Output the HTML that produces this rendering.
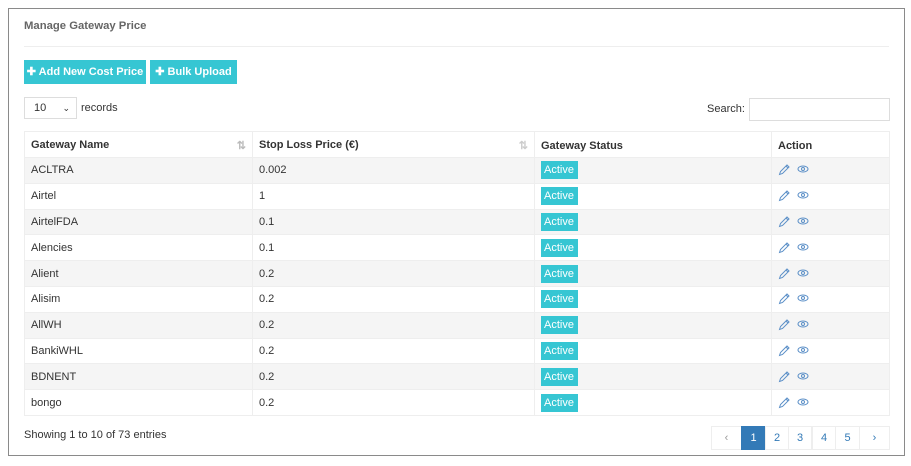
<!DOCTYPE html>
<html><head><meta charset="utf-8"><style>
*{box-sizing:border-box}
body{margin:0;width:911px;height:466px;background:#fff;font-family:"Liberation Sans",Arial,sans-serif;font-size:11px;color:#333;position:relative;overflow:hidden}
.frame{position:absolute;left:8px;top:8px;width:897px;height:448px;border:1.5px solid #8a8a8a}
.abs{position:absolute}
h1{position:absolute;left:24px;top:20px;margin:0;font-size:11.3px;font-weight:bold;color:#666}
.hr{position:absolute;left:24px;top:46px;width:865px;height:1px;background:#eee}
.btn{position:absolute;top:60px;height:24px;background:#36c6d3;color:#fff;font-weight:bold;font-size:11px;line-height:24px;text-align:center}
.sel{position:absolute;left:24px;top:97px;width:53px;height:22px;border:1px solid #ddd;padding-left:9px;line-height:20px}
table{position:absolute;left:24px;top:131px;width:866px;border-collapse:collapse}
td,th{border:1px solid #eee;height:25.8px;padding:0 6px;text-align:left;font-size:11px}
th{height:26px;padding-top:2px}
tbody tr:nth-child(odd){background:#f5f5f5}
.b{background:#36c6d3;color:#fff;padding:3px 4px 3px 3px;font-size:11px}
.pg{position:absolute;top:426px;height:24px;border:1px solid #eee;text-align:center;line-height:22px;color:#337ab7;font-size:11px}
</style></head><body>
<div class="frame"></div>
<h1>Manage Gateway Price</h1>
<div class="hr"></div>
<div class="btn" style="left:24px;width:122px">✚ Add New Cost Price</div>
<div class="btn" style="left:150px;width:87px">✚ Bulk Upload</div>
<div class="sel">10<span style="position:absolute;right:6px;top:0;font-size:9px">⌄</span></div>
<div class="abs" style="left:81px;top:102px">records</div>
<div class="abs" style="left:707px;top:103px">Search:</div>
<div class="abs" style="left:749px;top:98px;width:141px;height:23px;border:1px solid #ddd"></div>
<table>
<colgroup><col style="width:228px"><col style="width:282px"><col style="width:237px"><col></colgroup>
<thead><tr><th>Gateway Name<span style="float:right;color:#bbb">⇅</span></th><th>Stop Loss Price (€)<span style="float:right;color:#ccc">⇅</span></th><th>Gateway Status</th><th>Action</th></tr></thead>
<tbody>
<tr><td>ACLTRA</td><td>0.002</td><td><span class="b">Active</span></td><td class="ic"></td></tr>
<tr><td>Airtel</td><td>1</td><td><span class="b">Active</span></td><td class="ic"></td></tr>
<tr><td>AirtelFDA</td><td>0.1</td><td><span class="b">Active</span></td><td class="ic"></td></tr>
<tr><td>Alencies</td><td>0.1</td><td><span class="b">Active</span></td><td class="ic"></td></tr>
<tr><td>Alient</td><td>0.2</td><td><span class="b">Active</span></td><td class="ic"></td></tr>
<tr><td>Alisim</td><td>0.2</td><td><span class="b">Active</span></td><td class="ic"></td></tr>
<tr><td>AllWH</td><td>0.2</td><td><span class="b">Active</span></td><td class="ic"></td></tr>
<tr><td>BankiWHL</td><td>0.2</td><td><span class="b">Active</span></td><td class="ic"></td></tr>
<tr><td>BDNENT</td><td>0.2</td><td><span class="b">Active</span></td><td class="ic"></td></tr>
<tr><td>bongo</td><td>0.2</td><td><span class="b">Active</span></td><td class="ic"></td></tr>
</tbody></table>
<script>
document.querySelectorAll('.ic').forEach(function(t){t.innerHTML='<svg width="40" height="12" viewBox="0 0 40 12" style="vertical-align:middle"><path d="M1.5 10.5 L2.5 7.5 L9 1 L11 3 L4.5 9.5 Z M8 2 L10 4" fill="none" stroke="#5b8fc7" stroke-width="1"/><ellipse cx="25" cy="5" rx="5" ry="3" fill="none" stroke="#5b8fc7" stroke-width="1"/><circle cx="25" cy="5" r="1.5" fill="none" stroke="#5b8fc7" stroke-width="1"/></svg>'});
</script>
<div class="abs" style="left:24px;top:429px">Showing 1 to 10 of 73 entries</div>
<div class="pg" style="left:711px;width:31px;color:#999">‹</div>
<div class="pg" style="left:741px;width:25px;background:#337ab7;color:#fff;border-color:#337ab7">1</div>
<div class="pg" style="left:765px;width:24px">2</div>
<div class="pg" style="left:788px;width:24px">3</div>
<div class="pg" style="left:812px;width:24px">4</div>
<div class="pg" style="left:835px;width:25px">5</div>
<div class="pg" style="left:859px;width:31px">›</div>
</body></html>
